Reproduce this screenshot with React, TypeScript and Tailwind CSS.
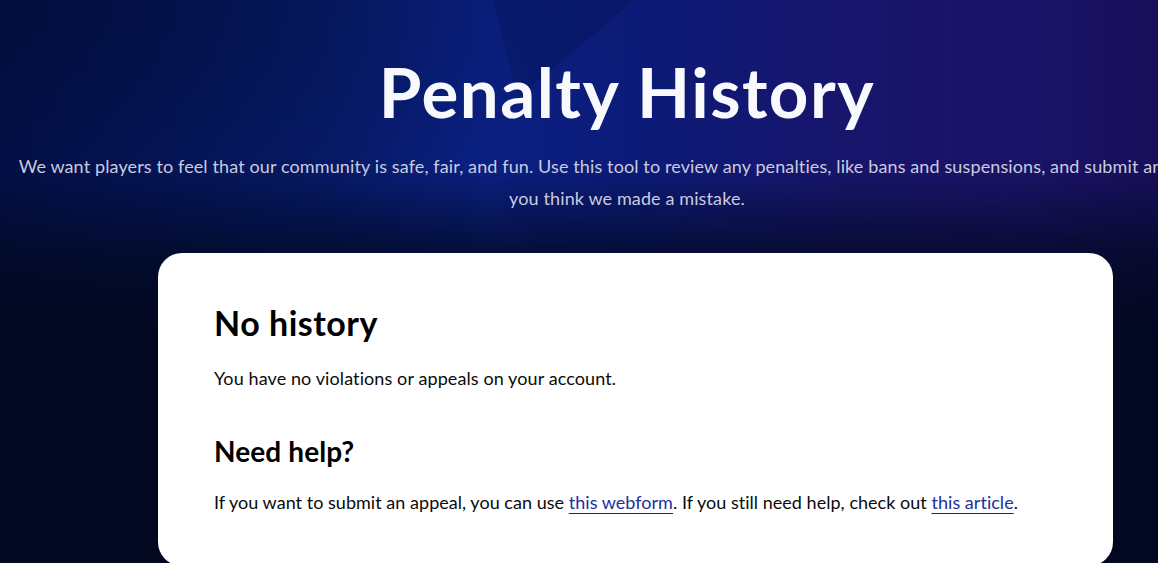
import React from "react";

export default function App() {
  return (
    <div className="relative h-[563px] w-full overflow-hidden bg-[#020820] font-['Lato','Liberation_Sans',sans-serif]">
      <div className="absolute inset-x-0 top-0 h-[400px] bg-[linear-gradient(90deg,#03104a_0%,#061a68_28%,#0a2082_42%,#0c1b78_55%,#17156c_72%,#1b1368_88%,#170f5a_100%)]" />
      <div className="absolute inset-x-0 top-0 h-[400px] bg-[radial-gradient(ellipse_at_0%_0%,rgba(2,8,32,0.35)_0%,rgba(2,8,32,0)_40%)]" />
      <div className="absolute inset-x-0 top-0 h-[400px] bg-[linear-gradient(180deg,rgba(2,8,32,0)_0%,rgba(2,8,32,0)_42%,rgba(2,8,32,0.75)_64%,#020820_84%)]" />
      <svg className="absolute left-0 top-0" width="1158" height="200" viewBox="0 0 1158 200">
        <polygon points="493,0 634,0 518,98" fill="#020a30" fillOpacity="0.2" />
      </svg>

      <div className="relative w-[1254px]">
        <h1 className="pt-[57px] text-center text-[69px] font-bold leading-[69px] tracking-[1.5px] text-[#f8f9fc]">
          Penalty History
        </h1>
        <p className="mt-6 whitespace-nowrap text-center text-[18px] leading-[32px] tracking-[0.12px] text-[#c9cbdf]">
          We want players to feel that our community is safe, fair, and fun. Use this tool to review any penalties, like bans and suspensions, and submit an appeal if
          <br />
          you think we made a mistake.
        </p>

        <div className="ml-[158px] mt-[39px] w-[955px] rounded-[24px] bg-white px-[56px] pb-[50px] pt-[50px] text-[#0b0b0b]">
          <h2 className="text-[34px] font-bold leading-[40px] tracking-[0.5px] text-black">No history</h2>
          <p className="mt-[21px] text-[18px] leading-[28px] tracking-[0.1px]">You have no violations or appeals on your account.</p>
          <h3 className="mt-[41px] text-[28px] font-bold leading-[36px] tracking-[0.1px] text-black">Need help?</h3>
          <p className="mt-[19px] text-[18px] leading-[28px] tracking-[0.03px]">
            If you want to submit an appeal, you can use{" "}
            <a href="#" className="text-[#1c2fa3] underline decoration-[#0a2a8a] decoration-1 underline-offset-4">
              this webform
            </a>
            . If you still need help, check out{" "}
            <a href="#" className="text-[#1c2fa3] underline decoration-[#0a2a8a] decoration-1 underline-offset-4">
              this article
            </a>
            .
          </p>
        </div>
      </div>
    </div>
  );
}
